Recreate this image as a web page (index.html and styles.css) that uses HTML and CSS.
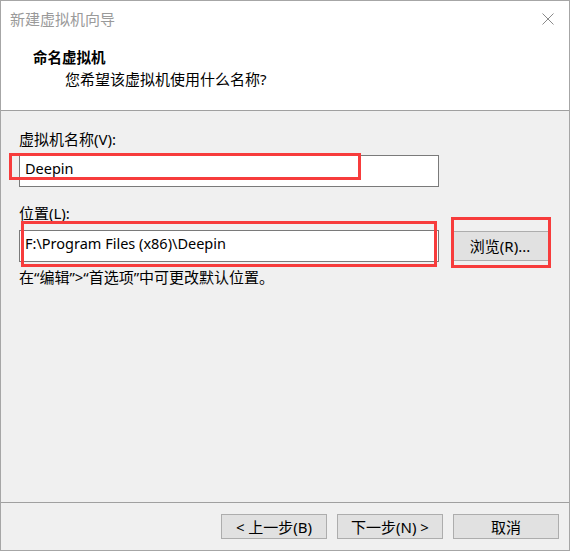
FILE: index.html
```html
<!DOCTYPE html>
<html lang="zh-CN">
<head>
<meta charset="utf-8">
<title>新建虚拟机向导</title>
<link rel="stylesheet" href="styles.css">
</head>
<body>
<div class="window">
  <div class="titlebar">
    <span class="title">新建虚拟机向导</span>
    <svg class="close" width="12" height="12" viewBox="0 0 12 12"><path d="M0.5 0.5 L11.5 11.5 M11.5 0.5 L0.5 11.5" stroke="#8a8a8a" stroke-width="1" fill="none"/></svg>
  </div>
  <div class="header">
    <div class="heading">命名虚拟机</div>
    <div class="subheading">您希望该虚拟机使用什么名称?</div>
  </div>
  <div class="content">
    <div class="label">虚拟机名称(V):</div>
    <div class="field name-field">Deepin</div>
    <div class="label label-loc">位置(L):</div>
    <div class="row">
      <div class="field loc-field">F:\Program Files (x86)\Deepin</div>
      <div class="btn browse">浏览(R)...</div>
    </div>
    <div class="hint">在“编辑”&gt;“首选项”中可更改默认位置。</div>
  </div>
  <div class="footer">
    <div class="btn fbtn">&lt; 上一步(B)</div>
    <div class="btn fbtn">下一步(N) &gt;</div>
    <div class="btn fbtn">取消</div>
  </div>
  <div class="mark mark-name"></div>
  <div class="mark mark-loc"></div>
  <div class="mark mark-browse"></div>
</div>
</body>
</html>
```

FILE: styles.css
```css
html, body {
  margin: 0;
  padding: 0;
  background: #ffffff;
}
body {
  font-family: "Noto Sans", "Noto Sans CJK SC", sans-serif;
  font-size: 15px;
  color: #000;
}
.window {
  position: relative;
  width: 570px;
  height: 551px;
  box-sizing: border-box;
  border: 1px solid #a6a6a6;
  background: #f0f0f0;
  display: flex;
  flex-direction: column;
}
.titlebar {
  height: 36px;
  background: #fff;
  display: flex;
  align-items: center;
  justify-content: space-between;
  padding: 0 15px 0 9px;
}
.title {
  color: #9a9a9a;
  line-height: 20px;
}
.close {
  display: block;
}
.header {
  background: #fff;
  border-bottom: 1px solid #a0a0a0;
  padding: 10px 0 0 32px;
  box-sizing: border-box;
  height: 74px;
}
.heading {
  font-weight: bold;
  font-size: 14.5px;
  line-height: 20px;
}
.subheading {
  margin-top: 2px;
  padding-left: 32px;
  line-height: 20px;
}
.content {
  flex: 1;
  padding: 18px 18px 0 18px;
}
.label {
  line-height: 20px;
}
.label-loc {
  margin-top: 16px;
}
.field {
  box-sizing: border-box;
  width: 420px;
  height: 32px;
  border: 1px solid #7a7a7a;
  background: #fff;
  padding: 0 0 0 5px;
  font-size: 14.5px;
  line-height: 24px;
}
.name-field {
  margin-top: 6px;
}
.row {
  display: flex;
  align-items: center;
  margin-top: 7px;
}
.btn {
  box-sizing: border-box;
  background: #e1e1e1;
  border: 1px solid #adadad;
  display: flex;
  align-items: center;
  justify-content: center;
  line-height: 20px;
}
.browse {
  width: 98px;
  height: 30px;
  margin-left: 12px;
}
.hint {
  margin-top: 5px;
  line-height: 20px;
}
.footer {
  border-top: 1px solid #a0a0a0;
  height: 48px;
  box-sizing: border-box;
  display: flex;
  justify-content: flex-end;
  gap: 10px;
  padding: 11px 10px 0 0;
}
.fbtn {
  width: 106px;
  height: 25px;
}
.mark {
  position: absolute;
  border: 3px solid #f73c3c;
  box-sizing: border-box;
}
.mark-name {
  left: 8px;
  top: 152px;
  width: 352px;
  height: 27px;
}
.mark-loc {
  left: 20px;
  top: 220px;
  width: 416px;
  height: 46px;
}
.mark-browse {
  left: 450px;
  top: 216px;
  width: 100px;
  height: 51px;
}
```
